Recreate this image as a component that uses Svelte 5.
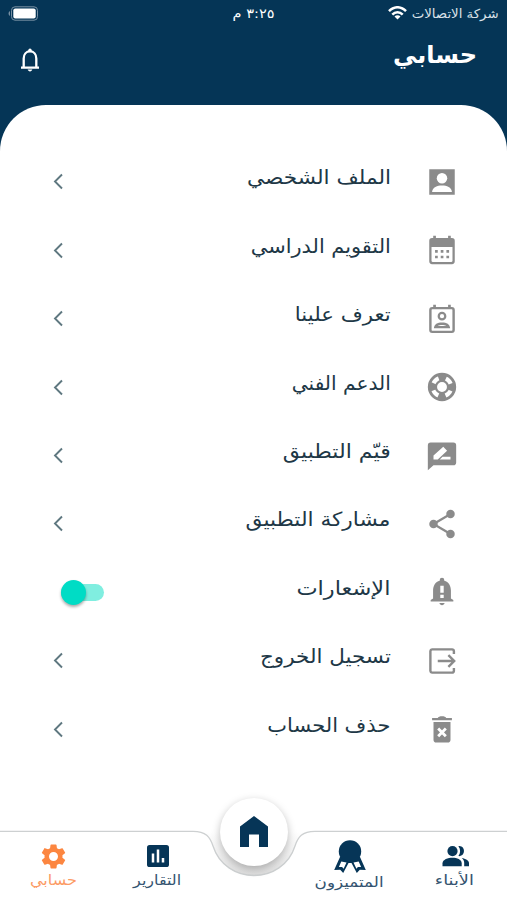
<script>
  const rows = [
    { icon: 'profile', label: 'الملف الشخصي', width: 144 },
    { icon: 'calendar', label: 'التقويم الدراسي', width: 140 },
    { icon: 'about', label: 'تعرف علينا', width: 96 },
    { icon: 'support', label: 'الدعم الفني', width: 99 },
    { icon: 'rate', label: 'قيّم التطبيق', width: 108 },
    { icon: 'share', label: 'مشاركة التطبيق', width: 145 },
    { icon: 'alert', label: 'الإشعارات', width: 94, toggle: true },
    { icon: 'logout', label: 'تسجيل الخروج', width: 131 },
    { icon: 'trash', label: 'حذف الحساب', width: 123 }
  ];

  let enabled = $state(true);

  // Condenses or widens a label so that it fills its measure.
  function fit(node, width) {
    node.style.transform = `scaleX(${width / node.getBoundingClientRect().width})`;
  }
</script>

{#snippet label(text, width)}
  <span class="measure" style:width="{width}px"><span class="fitted" use:fit={width}>{text}</span></span>
{/snippet}

<div class="screen" dir="rtl">
  <header>
    <div class="status">
      <div class="carrier">
        {@render label('شركة الاتصالات', 87)}
        <svg class="wifi" width="19" height="14" viewBox="0 0 19 14">
          <g fill="none" stroke="#fff" stroke-width="2.5">
            <path d="M1 5.200C6-.1 13-.1 18 5.200" />
            <path d="M4.300 8.600c3-3.200 7.400-3.200 10.400 0" />
          </g>
          <path d="M9.500 13.600L6.500 10.600c1.700-1.700 4.300-1.700 6 0z" fill="#fff" />
        </svg>
      </div>
      <div class="time">{@render label('٣:٢٥ م', 42)}</div>
      <svg class="battery" width="31" height="15" viewBox="0 0 31 15">
        <rect x="3.500" y=".8" width="26" height="13.400" rx="3.500" fill="none" stroke="#7890a3" />
        <rect x="5.300" y="2.600" width="22.400" height="9.800" rx="2" fill="#fff" />
        <path d="M2 5C0 6 0 9 2 10z" fill="#7890a3" />
      </svg>
    </div>
    <div class="titlebar">
      <h1>{@render label('حسابي', 84)}</h1>
      <svg class="bell" width="20" height="24" viewBox="0 0 20 24">
        <path d="M1 19.600h18M3.700 19V10.500C3.700 6.500 6.200 3.400 10 3.400s6.300 3.100 6.300 7.100V19" fill="none" stroke="#fff" stroke-width="2.300" />
        <circle cx="10" cy="2.200" r="1.700" fill="#fff" />
        <path d="M7.700 21.600h4.600c-.3 2.400-4.300 2.400-4.600 0z" fill="#fff" />
      </svg>
    </div>
  </header>

  <main>
    {#each rows as row}
      <div class="row">
        <svg class="icon" width="34" height="34" viewBox="0 0 24 24" fill="#8b8b8b">
          {#if row.icon === 'profile'}
            <path d="M3 3h18v18H3z" />
            <circle cx="12" cy="9.400" r="3.700" fill="#fff" />
            <path d="M5 19c.3-3.200 3.600-4.500 7-4.500s6.700 1.300 7 4.500z" fill="#fff" />
          {:else if row.icon === 'calendar'}
            <path d="M5 3.500h14a2 2 0 0 1 2 2V20a2 2 0 0 1-2 2H5a2 2 0 0 1-2-2V5.500a2 2 0 0 1 2-2zM5.800 2h1.900v3H5.800zM16.300 2h1.900v3h-1.900z" />
            <path d="M4.600 9.800h14.800V19.500a.9.900 0 0 1-.9.900h-13a.9.900 0 0 1-.9-.9z" fill="#fff" />
            <path d="M7.100 12h1.900v1.900H7.100zm4 0H13v1.900h-1.900zm4 0H17v1.900h-1.900zm-8 4h1.900v1.900H7.100zm4 0H13v1.900h-1.900zm4 0H17v1.900h-1.900z" />
          {:else if row.icon === 'about'}
            <rect x="3.800" y="4.300" width="16.400" height="16.800" rx="1.300" fill="none" stroke="#8b8b8b" stroke-width="1.700" />
            <path d="M5.800 2h1.900v3H5.800zM16.300 2h1.900v3h-1.900z" />
            <circle cx="12" cy="10" r="2.300" fill="none" stroke="#8b8b8b" stroke-width="1.600" />
            <path d="M6.300 18.500c0-2.900 2.600-4.100 5.700-4.100s5.700 1.200 5.700 4.100z" />
            <path d="M9 17c1.500-1 4.500-1 6 0z" fill="#fff" />
          {:else if row.icon === 'support'}
            <circle cx="12" cy="12" r="9" fill="#fff" stroke="#8b8b8b" stroke-width="2" />
            <circle cx="12" cy="12" r="6.500" fill="none" stroke="#8b8b8b" stroke-width="5" stroke-dasharray="5.200 5.010" stroke-dashoffset="2.600" />
            <circle cx="12" cy="12" r="4.300" fill="#fff" stroke="#8b8b8b" stroke-width="1.600" />
          {:else if row.icon === 'rate'}
            <path d="M4 2.500h16a2 2 0 0 1 2 2v12a2 2 0 0 1-2 2H6L2 22V4.500a2 2 0 0 1 2-2z" />
            <path d="M6 14.500v-2.800l6.900-6.300 2.700 2.900L9 14.500zM10.400 14.500l2-2H18v2z" fill="#fff" />
          {:else if row.icon === 'share'}
            <path d="M18 5L6 12l12 7" fill="none" stroke="#8b8b8b" stroke-width="1.600" />
            <circle cx="18" cy="5" r="3" /><circle cx="6" cy="12" r="3" /><circle cx="18" cy="19" r="3" />
          {:else if row.icon === 'alert'}
            <path d="M10.400 4V3.600a1.600 1.600 0 0 1 3.200 0V4c3.100.8 4.700 3.600 4.700 7v5.500l1.700 1.200v1H4v-1l1.700-1.200V11c0-3.400 1.600-6.200 4.700-7zM10.200 19.800h3.600c-.2 2-3.400 2-3.600 0z" />
            <path d="M10.800 7.500h2.400v5h-2.400zM10.800 14h2.400v2.200h-2.400z" fill="#fff" />
          {:else if row.icon === 'logout'}
            <path d="M20.400 7V5a1.300 1.300 0 0 0-1.300-1.200H5A1.300 1.300 0 0 0 3.800 5v14A1.300 1.300 0 0 0 5 20.200h14.100a1.300 1.300 0 0 0 1.300-1.200v-2M9 12h11.500M16.500 7.900L20.600 12l-4.100 4.100" fill="none" stroke="#8b8b8b" stroke-width="1.700" />
          {:else}
            <path d="M6 7h12v12.500a2 2 0 0 1-2 2H8a2 2 0 0 1-2-2zM5 4.200h4c.4-1.600 5.600-1.600 6 0h4v1.700H5z" />
            <path d="M9.300 11.700l5.400 5.400m0-5.400l-5.400 5.400" stroke="#fff" stroke-width="2" />
          {/if}
        </svg>
        <div class="caption">{@render label(row.label, row.width)}</div>
        {#if row.toggle}
          <button class="toggle" class:off={!enabled} aria-label={row.label} onclick={() => (enabled = !enabled)}><i></i></button>
        {:else}
          <svg class="chevron" width="12" height="17" viewBox="0 0 12 17">
            <path d="M10 1.500L3 8.500l7 7" fill="none" stroke="#5f7880" stroke-width="1.900" />
          </svg>
        {/if}
      </div>
    {/each}
  </main>

  <nav>
    <svg class="edge" width="507" height="72" viewBox="0 828 507 72">
      <defs>
        <linearGradient id="well" x1="0" y1="0" x2="0" y2="1">
          <stop offset="0" stop-color="#fff" />
          <stop offset=".5" stop-color="#f1f1f1" />
          <stop offset="1" stop-color="#dedede" />
        </linearGradient>
      </defs>
      <path d="M193 831.300C206 831.300 210 837 213 846C219 865 236 875.500 254 875.500C272 875.500 289 865 295 846C298 837 302 831.300 315 831.300z" fill="url(#well)" />
      <path d="M0 831.300H193C206 831.300 210 837 213 846C219 865 236 875.500 254 875.500C272 875.500 289 865 295 846C298 837 302 831.300 315 831.300H507" fill="none" stroke="#cdd0d1" stroke-width="1.300" />
    </svg>
    <div class="tabs">
      <div class="tab first">
        <svg width="30" height="30" viewBox="0 0 30 30" fill="#063557">
          <circle cx="12.500" cy="10.100" r="5.100" />
          <path d="M2.500 25.200v-3c0-3.700 5.500-5.500 10-5.500s9.200 1.800 9.200 5.500v3z" />
          <path d="M18.400 5.200c7.300-1.300 7.700 10.900 0 9.900 2.300-2.900 2.300-7 0-9.900zM21.700 17c3.800.7 7.300 2.300 7.300 5.100v3.100h-4.800v-3.100c0-2.100-.8-3.800-2.500-5.100z" />
        </svg>
        {@render label('الأبناء', 39)}
      </div>
      <div class="tab second">
        <svg width="34" height="34" viewBox="0 0 34 34" fill="#063557">
          <circle cx="17" cy="12.500" r="11.200" />
          <path d="M7 18L1.200 31l6-.3 3 3.300L15.500 24h3L23.800 34l3-3.300 6 .3L27 18z" />
          <path d="M8.300 22.500L5.900 28l3.200-.1 1.500 1.800 2.900-6.200zM25.700 22.500l2.400 5.500-3.200-.1-1.500 1.800-2.900-6.200z" fill="#fff" />
        </svg>
        {@render label('المتميزون', 69)}
      </div>
      <div class="tab third">
        <svg width="30" height="30" viewBox="0 0 30 30">
          <rect x="4" y="4" width="22" height="22" rx="2.600" fill="#063557" />
          <path d="M10 12.500v9M15 8.500v13M20 17v4.500" stroke="#fff" stroke-width="2.500" />
        </svg>
        {@render label('التقارير', 48)}
      </div>
      <div class="tab fourth">
        <svg width="30" height="30" viewBox="2 2 20 20">
          <path fill="#fc8640" fill-rule="evenodd" d="M19.140 12.940c.04-.3.060-.61.060-.94s-.02-.64-.07-.94l2.030-1.580c.18-.14.230-.41.120-.61l-1.920-3.320c-.12-.22-.37-.29-.59-.22l-2.390.96c-.5-.38-1.030-.7-1.620-.94l-.36-2.540c-.04-.24-.24-.41-.48-.41h-3.840c-.24 0-.43.170-.47.410l-.36 2.540c-.59.240-1.130.570-1.620.940l-2.390-.96c-.22-.08-.47 0-.59.220L2.740 8.870c-.12.210-.08.470.120.610l2.030 1.580c-.05.300-.09.630-.09.940s.02.640.070.940l-2.030 1.580c-.18.140-.23.410-.12.610l1.920 3.320c.12.220.370.290.590.220l2.390-.96c.5.380 1.030.700 1.620.940l.36 2.540c.05.240.240.410.480.410h3.840c.24 0 .440-.17.470-.41l.36-2.540c.59-.24 1.130-.56 1.620-.94l2.390.96c.22.080.470 0 .590-.22l1.920-3.320c.12-.22.070-.47-.12-.61zM12 15.600a3.600 3.600 0 1 1 0-7.200 3.600 3.600 0 0 1 0 7.200z" />
        </svg>
        {@render label('حسابي', 47)}
      </div>
    </div>
    <div class="home">
      <svg width="28" height="32" viewBox="0 0 28 32"><path d="M0 31V10.500L14 0l14 10.500V31h-9V18.500H9V31z" fill="#063557" /></svg>
    </div>
  </nav>
</div>

<style>
  :global(body) { margin: 0; }
  .screen {
    width: 507px;
    height: 900px;
    overflow: hidden;
    display: flex;
    flex-direction: column;
    background: #053556;
    font-family: 'DejaVu Sans', sans-serif;
    position: relative;
  }
  .measure { display: block; white-space: nowrap; text-align: right; }
  .fitted { display: inline-block; transform-origin: right center; }
  header { height: 104.500px; flex: none; color: #fff; }
  .status {
    height: 27px;
    display: grid;
    grid-template-columns: 1fr auto 1fr;
    align-items: center;
    padding: 0 8px;
    font-size: 12.500px;
    line-height: 27px;
  }
  .carrier { display: flex; align-items: center; gap: 5px; color: #d9e1e8; }
  .wifi { margin-top: -1px; }
  .time { font-size: 13px; }
  .battery { justify-self: end; margin-top: -1px; }
  .titlebar { height: 77px; display: flex; justify-content: space-between; padding: 0 30px 0 20px; }
  h1 { margin: 12px 0 0; font-size: 24px; line-height: 32px; font-weight: 700; }
  .bell { margin-top: 21px; }
  main {
    flex: 1;
    box-sizing: border-box;
    background: #fff;
    border-radius: 46px 46px 0 0;
    padding: 43.300px 48px 0 52px;
  }
  .row { height: 68.400px; display: flex; align-items: center; }
  .icon { flex: none; margin-left: 34.500px; }
  .caption { flex: 1; color: #203746; font-size: 19.500px; line-height: 30px; margin-top: -7px; }
  .chevron { flex: none; }
  .toggle {
    width: 43px;
    height: 17px;
    margin: 0 0 0 9px;
    padding: 0;
    border: 0;
    border-radius: 9px;
    background: #80eee0;
    display: flex;
    align-items: center;
    justify-content: flex-end;
  }
  .toggle i { width: 25px; height: 25px; border-radius: 50%; background: #00dcc5; box-shadow: 0 2px 3px #0005; }
  .toggle.off { justify-content: flex-start; background: #ccc; }
  nav { position: absolute; left: 0; right: 0; bottom: 0; height: 72px; }
  .edge { position: absolute; inset: 0; }
  .tabs {
    position: relative;
    height: 72px;
    display: grid;
    direction: ltr;
    grid-template-columns: 106px 103px 88px 105px 105px;
  }
  .tab { direction: rtl; display: flex; flex-direction: column; align-items: center; grid-row: 1; padding-top: 13px; color: #345470; font-size: 14px; line-height: 18px; }
  .tab svg { flex: none; }
  .first { grid-column: 5; }
  .second { grid-column: 4; padding-top: 10.500px; }
  .third { grid-column: 2; }
  .fourth { grid-column: 1; color: #fc9b65; }
  .fourth svg { width: 25px; height: 25px; margin: 3px 0 2px; }
  .home {
    position: absolute;
    left: 220px;
    top: -30px;
    width: 68px;
    height: 68px;
    border-radius: 50%;
    background: #fff;
    box-shadow: 0 3px 8px #0004;
    display: flex;
    align-items: center;
    justify-content: center;
  }
</style>
